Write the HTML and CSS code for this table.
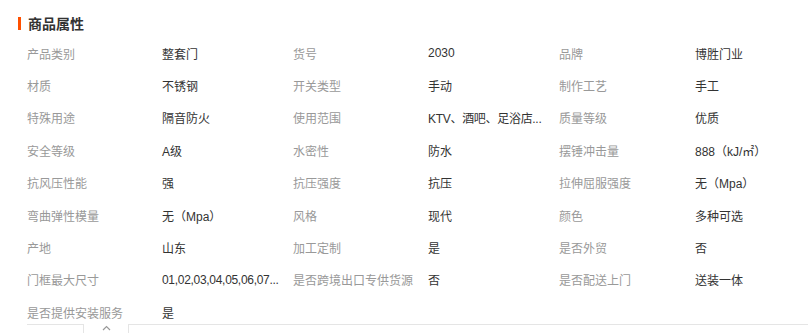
FILE: index.html
```html
<!DOCTYPE html>
<html lang="zh">
<head>
<meta charset="utf-8">
<link rel="stylesheet" href="styles.css">
</head>
<body>
<div class="panel">
  <div class="title"><span class="bar"></span><h2>商品属性</h2></div>
  <div class="grid">
    <div class="k">产品类别</div><div class="v">整套门</div>
    <div class="k">货号</div><div class="v">2030</div>
    <div class="k">品牌</div><div class="v">博胜门业</div>

    <div class="k">材质</div><div class="v">不锈钢</div>
    <div class="k">开关类型</div><div class="v">手动</div>
    <div class="k">制作工艺</div><div class="v">手工</div>

    <div class="k">特殊用途</div><div class="v">隔音防火</div>
    <div class="k">使用范围</div><div class="v tight">KTV、酒吧、足浴店...</div>
    <div class="k">质量等级</div><div class="v">优质</div>

    <div class="k">安全等级</div><div class="v">A级</div>
    <div class="k">水密性</div><div class="v">防水</div>
    <div class="k">摆锤冲击量</div><div class="v">888（kJ/㎡）</div>

    <div class="k">抗风压性能</div><div class="v">强</div>
    <div class="k">抗压强度</div><div class="v">抗压</div>
    <div class="k">拉伸屈服强度</div><div class="v">无（Mpa）</div>

    <div class="k">弯曲弹性模量</div><div class="v">无（Mpa）</div>
    <div class="k">风格</div><div class="v">现代</div>
    <div class="k">颜色</div><div class="v">多种可选</div>

    <div class="k">产地</div><div class="v">山东</div>
    <div class="k">加工定制</div><div class="v">是</div>
    <div class="k">是否外贸</div><div class="v">否</div>

    <div class="k">门框最大尺寸</div><div class="v tight">01,02,03,04,05,06,07...</div>
    <div class="k">是否跨境出口专供货源</div><div class="v">否</div>
    <div class="k">是否配送上门</div><div class="v">送装一体</div>

    <div class="k">是否提供安装服务</div><div class="v">是</div>
  </div>
  <div class="tabs">
    <div class="tab-left"></div>
    <div class="tab-caret"><svg width="9" height="6" viewBox="0 0 9 6"><path d="M1 5 L4.5 1.5 L8 5" fill="none" stroke="#999" stroke-width="1.2"/></svg></div>
    <div class="tab-right"></div>
  </div>
</div>
</body>
</html>
```

FILE: styles.css
```css
html, body {
  margin: 0;
  padding: 0;
  background: #fff;
}
body {
  font-family: "Liberation Sans", "Noto Sans CJK SC", sans-serif;
  font-size: 12px;
  color: #333;
  width: 808px;
  height: 333px;
  overflow: hidden;
}
.panel {
  padding-top: 15px;
}
.title {
  display: flex;
  align-items: center;
  padding-left: 18px;
  height: 16px;
}
.bar {
  width: 3px;
  height: 13px;
  background: #ff5000;
  margin-right: 7px;
}
.title h2 {
  margin: 0;
  font-size: 14px;
  font-weight: bold;
  color: #333;
  line-height: 16px;
  font-family: "Noto Sans CJK SC", sans-serif;
}
.grid {
  display: grid;
  grid-template-columns: 135px 131px 135px 131px 136px 113px;
  grid-auto-rows: 32.375px;
  padding-left: 27px;
  margin-top: 6px;
  align-items: center;
}
.k {
  color: #999;
  white-space: nowrap;
}
.v {
  color: #333;
  white-space: nowrap;
}
.tight {
  letter-spacing: -0.3px;
}
.tabs {
  display: flex;
  height: 12px;
  margin-top: -4px;
}
.tab-left {
  margin-left: 27px;
  width: 56px;
  border-top: 1px solid #e5e5e5;
  border-right: 1px solid #e5e5e5;
}
.tab-caret {
  width: 44px;
  display: flex;
  justify-content: center;
  padding-top: 1px;
}
.tab-right {
  flex: 1;
  border-top: 1px solid #e5e5e5;
  border-left: 1px solid #e5e5e5;
}
```
